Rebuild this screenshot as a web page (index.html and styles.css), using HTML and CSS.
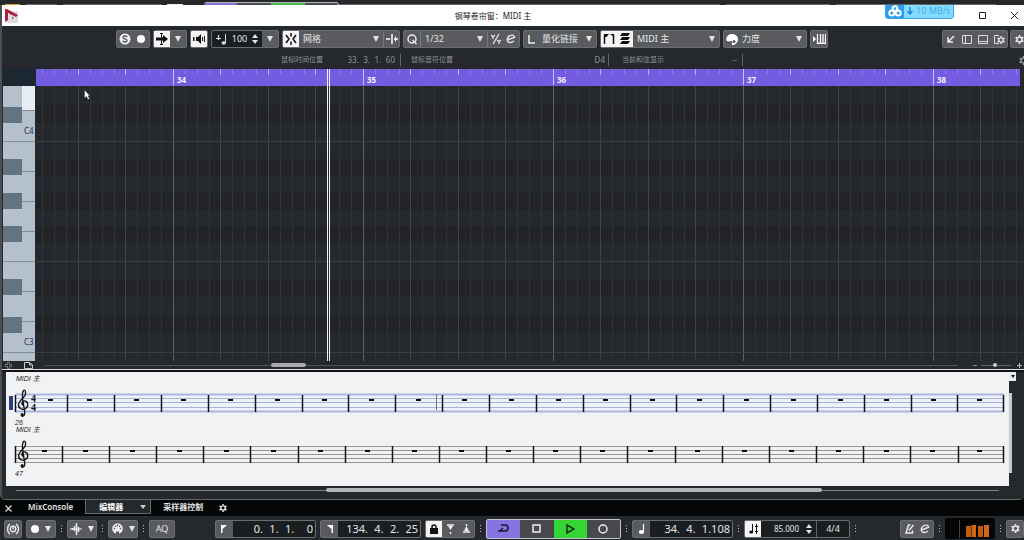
FILE: index.html
```html
<!DOCTYPE html>
<html lang="zh-CN">
<head>
<meta charset="utf-8">
<title>钢琴卷帘窗：MIDI 主</title>
<link rel="stylesheet" href="styles.css">
</head>
<body>
<svg class="defs" width="0" height="0" aria-hidden="true">
  <symbol id="down" viewBox="0 0 6 6"><path d="M0 0h6L3 6z" fill="currentColor"/></symbol>
  <symbol id="updown" viewBox="0 0 6 10"><path d="M0 4h6L3 0zM0 6h6L3 10z" fill="currentColor"/></symbol>
  <symbol id="gear" viewBox="0 0 10 10"><circle cx="5" cy="5" r="2.7" fill="none" stroke="currentColor" stroke-width="1.7"/><path d="M5 0v2M5 8v2M.7 2.5l1.7 1M7.6 6.5l1.7 1M.7 7.5l1.7-1M7.6 3.5l1.7-1" stroke="currentColor" stroke-width="1.9"/></symbol>
  <symbol id="edit" viewBox="0 0 10 10"><path d="M1.500 6L8.600 3.200C8.300 1.200 6.500.8 4.800 1.300 2.600 2 1.100 4.300 1.300 6.300c.3 2.600 3.700 2.900 6.700.7" fill="none" stroke="currentColor" stroke-width="1.400"/></symbol>
</svg>

<div class="backdrop" aria-hidden="true"><svg width="1024" height="5">
  <path d="M5 4.500h15" stroke="#d7a63a"/><path d="M26 4.500h31M63 4.500h99M300 4.500h420M726 4.500h104M836 4.500h160" stroke="#65686b"/><path d="M167 4.500h16" stroke="#eee"/>
  <path d="M205 5V3.500q0-1 1-1h131q1 0 1 1V5" fill="none" stroke="#b9b8c2"/><path d="M206 4h31" stroke="#8273d8" stroke-width="2"/><path d="M237 4h34M305 4h32" stroke="#4a4c50" stroke-width="2"/><path d="M271 4h34" stroke="#49b947" stroke-width="2"/>
</svg></div>

<div class="window">
<header class="titlebar">
  <svg class="logo" width="14" height="14" viewBox="0 0 14 14"><path d="M5 2h8v12H1z" fill="#dcdcde"/><path d="M0 0h2l11 6-2 2-8-4v7l-3 2z" fill="#ad1f3c"/><path d="M7 8l2 1-2 1z" fill="#8f1b33"/></svg>
  <h1>钢琴卷帘窗：MIDI 主</h1>
  <div class="winbtns">
    <button aria-label="最大化"><svg width="9" height="9"><path d="M1.500 1.500h6v6h-6z" fill="none" stroke="#222"/></svg></button>
    <button aria-label="关闭"><svg width="9" height="9"><path d="M1 1l7 7M8 1L1 8" stroke="#222"/></svg></button>
  </div>
</header>
<div class="speed"><span class="speed-icon"><svg width="14" height="12" viewBox="0 0 14 12" fill="none" stroke="#fff" stroke-width="2"><circle cx="7" cy="3.600" r="2.300"/><circle cx="3.800" cy="8" r="2.500"/><circle cx="10.200" cy="8" r="2.500"/></svg></span><svg width="6" height="8" viewBox="0 0 6 8"><path d="M3 0v6M.5 4L3 7l2.500-3" fill="none" stroke="#168bd8" stroke-width="1.500"/></svg><span>10 MB/s</span></div>

<div class="toolbar">
  <div class="group">
    <button aria-label="独奏"><svg width="12" height="12"><circle cx="6" cy="6" r="5.500" fill="#f0f0f0"/><path d="M8.300 4C7 2.600 4 2.700 4 4.400 4 6.200 8 5.700 8 7.600 8 9.300 5 9.400 3.700 8" fill="none" stroke="#55575a" stroke-width="1.400"/></svg></button>
    <button aria-label="录制"><svg width="8" height="8"><circle cx="4" cy="4" r="4" fill="#fff"/></svg></button>
  </div>
  <div class="group">
    <button class="on" aria-label="自动滚动"><svg width="12" height="12"><path d="M0 6h8" stroke="#111" stroke-width="3"/><path d="M7 2l5 4-5 4z" fill="#111"/><path d="M5.500 1v10M4 .5h3M4 11.500h3" stroke="#111"/></svg></button>
    <button aria-label="滚动选项"><svg class="tri"><use href="#down"/></svg></button>
  </div>
  <div class="group"><button class="on" aria-label="试听"><svg width="12" height="10"><path d="M3 3h2l3-3v10L5 7H3zM0 3h1v4H0zM1.500 3H2v4h-.5zM9 3h1v4H9zM11 2h1v6h-1z" fill="#111"/></svg></button></div>
  <div class="group">
    <label class="field vel"><svg width="11" height="11"><path d="M2.500 1v5M0 4.500h5" stroke="#ddd" stroke-width="1.200"/><path d="M9.500 0v9" stroke="#ddd"/><ellipse cx="7.700" cy="9" rx="2.200" ry="1.700" fill="#ddd"/></svg><input value="100" aria-label="插入力度"><svg width="6" height="10"><use href="#updown"/></svg></label>
    <button aria-label="力度选项"><svg class="tri"><use href="#down"/></svg></button>
  </div>
  <div class="group">
    <button class="on" aria-label="吸附"><svg width="12" height="12" fill="none" stroke="#111" stroke-width="1.500"><path d="M1 2L4 6 1 10M11 2L8 6l3 4M6 0v3.500M6 8.500V12"/></svg></button>
    <label class="pick snap"><select aria-label="吸附类型"><option>网格</option></select><svg class="tri"><use href="#down"/></svg></label>
    <button class="cut" aria-label="吸附到零点"><svg width="12" height="10"><path d="M0 5h4M8 5h4M6 0v10" stroke="#fff" stroke-width="1.500"/><path d="M9.500 2.500v5" stroke="#fff"/></svg></button>
  </div>
  <div class="group">
    <button aria-label="应用量化"><svg width="11" height="11" fill="none" stroke="#eee" stroke-width="1.500"><circle cx="5" cy="5" r="4"/><path d="M5.500 6l4 4"/></svg></button>
    <label class="pick quant cut"><select aria-label="量化预设"><option>1/32</option></select><svg class="tri"><use href="#down"/></svg></label>
    <button class="cut" aria-label="连音"><svg width="10" height="10" fill="none" stroke="#eee" stroke-width="1.200"><path d="M8 0L2 10M0 1l2 2 2-2M2 3v2M6 6l2 1.500L10 6M8 7v3"/></svg></button>
    <button aria-label="量化面板"><svg width="10" height="10"><use href="#edit"/></svg></button>
  </div>
  <div class="group"><label class="pick link"><svg width="8" height="9"><path d="M1 0v8h6" fill="none" stroke="#eee" stroke-width="1.500"/></svg><select aria-label="长度量化"><option>量化链接</option></select><svg class="tri"><use href="#down"/></svg></label></div>
  <div class="group">
    <button class="on" aria-label="显示分部边界"><svg width="12" height="10"><path d="M1.500 10V1M10.500 10V1" stroke="#111" stroke-width="1.500"/><path d="M1 0h5L3.500 3H1zM7 0h4v3z" fill="#111"/></svg></button>
    <button class="on" aria-label="仅编辑激活分部"><svg width="12" height="12"><path d="M3 0h8L9 3H1zM3 4h8L9 7H1zM3 8h8l-2 3H1z" fill="#111"/></svg></button>
    <label class="pick part"><select aria-label="当前分部"><option>MIDI 主</option></select><svg class="tri"><use href="#down"/></svg></label>
  </div>
  <div class="group"><label class="pick color"><svg width="12" height="11"><path d="M6 0c4 0 6 2.500 6 5.500S9 11 7 11c-2.500 0 0-2-1-3.500C5 6 1 9 .3 6 0 2.500 2.500 0 6 0z" fill="#fff"/><circle cx="8" cy="7.500" r="1.500" fill="#595b5e"/></svg><select aria-label="事件颜色"><option>力度</option></select><svg class="tri"><use href="#down"/></svg></label></div>
  <div class="group"><button aria-label="键盘输入"><svg width="13" height="10"><path d="M0 2l3 3-3 3z" fill="#fff"/><path d="M4.500 0v10M7.500 0v10M10 0v10M12.500 0v10M4 9.500h9" stroke="#fff" stroke-width="1.300"/></svg></button></div>
  <div class="group right">
    <button aria-label="在下部区域打开"><svg width="8" height="8" fill="none" stroke="#eee" stroke-width="1.500"><path d="M7 1L1.500 6.500M1 2v5h5"/></svg></button>
    <button aria-label="左侧区域"><svg width="10" height="9" fill="none" stroke="#ddd"><path d="M.5.5h9v8h-9zM3.500.5v8"/></svg></button>
    <button aria-label="下部区域"><svg width="10" height="9" fill="none" stroke="#ddd"><path d="M.5.5h9v8h-9zM.5 6.500h9"/></svg></button>
    <button aria-label="布局设置"><svg width="11" height="9" fill="none" stroke="#ddd"><path d="M5 .5H.5v8H5"/><use href="#gear" x="3" y="1" width="8" height="8"/></svg></button>
  </div>
  <div class="group"><button aria-label="设置"><svg width="9" height="9"><use href="#gear"/></svg></button></div>
</div>

<div class="info">
  <div class="cell"><span>鼠标时间位置</span><b>33.&#8199;3.&#8199;1.&#8199;60</b></div>
  <div class="cell wide"><span>鼠标音符位置</span><b>D4</b></div>
  <div class="cell"><span>当前和弦显示</span><b>--</b></div>
  <button class="infogear" aria-label="信息栏设置"><svg width="9" height="9"><use href="#gear"/></svg></button>
</div>

<div class="ruler">
  <div class="corner"></div>
  <svg class="ticks" width="100%" height="17">
    <defs><pattern id="t" x="137" width="190" height="17" patternUnits="userSpaceOnUse">
      <path d="M12.500 0v5M24.500 0v5M36.500 0v5M59.500 0v5M71.500 0v5M83.500 0v5M107.500 0v5M119.500 0v5M131.500 0v5M154.500 0v5M166.500 0v5M178.500 0v5" stroke="#8f7ae6"/>
      <path d="M47.500 0v6M95.500 0v6M142.500 0v6" stroke="#bdb0f2"/><path d="M.5 0v16" stroke="#c9c0f5"/>
    </pattern></defs>
    <rect width="100%" height="17" fill="#745ce0"/><rect width="100%" height="17" fill="url(#t)"/>
    <g class="barno"><text x="141" y="14">34</text><text x="331" y="14">35</text><text x="521" y="14">36</text><text x="711" y="14">37</text><text x="901" y="14">38</text></g>
    <path d="M291.500 0v17M293.500 0v17" stroke="#f0eefa"/>
  </svg>
</div>

<div class="editor">
  <svg class="keys" width="32" height="275">
    <rect width="32" height="275" fill="#b4c0cb"/><rect x="19" width="13" height="24" fill="#e6edf5"/>
    <path d="M19 24.500h13M0 55.500h32M19 85.500h13M19 115.500h13M19 145.500h13M0 175.500h32M19 205.500h13M19 235.500h13M0 266.500h32" stroke="#83909c"/>
    <path d="M0 21h19v16H0zM0 73h19v16H0zM0 107h19v16H0zM0 140h19v16H0zM0 193h19v16H0zM0 231h19v16H0z" fill="#637382"/>
    <text x="21" y="48">C4</text><text x="21" y="259">C3</text>
  </svg>
  <svg class="roll" width="100%" height="275">
    <defs><pattern id="g" x="137" width="190" height="275" patternUnits="userSpaceOnUse">
      <path d="M12.500 0v275M24.500 0v275M36.500 0v275M59.500 0v275M71.500 0v275M83.500 0v275M107.500 0v275M119.500 0v275M131.500 0v275M154.500 0v275M166.500 0v275M178.500 0v275" stroke="#303437"/>
      <path d="M47.500 0v275M95.500 0v275M142.500 0v275" stroke="#414547"/><path d="M.5 0v275" stroke="#5d6062"/>
    </pattern></defs>
    <rect width="100%" height="275" fill="#25292d"/>
    <g fill="#212327"><rect y="19" width="100%" height="18"/><rect y="73" width="100%" height="17"/><rect y="107" width="100%" height="17"/><rect y="140" width="100%" height="17"/><rect y="194" width="100%" height="17"/><rect y="230" width="100%" height="17"/></g>
    <rect width="100%" height="275" fill="url(#g)"/>
    <g fill="#3a3e41"><rect y="55" width="100%" height="1"/><rect y="175" width="100%" height="1"/><rect y="266" width="100%" height="1"/></g>
    <path d="M291.500 0v275M293.500 0v275" stroke="#eee"/>
    <path d="M48.500 4v8l2-1.500 1.500 3 1.500-.8-1.500-3h2z" fill="#fff" stroke="#222" stroke-width=".4"/>
  </svg>
</div>

<div class="hscroll">
  <svg width="7" height="7"><path d="M2.500.5h2v2h2v2h-2v2h-2v-2h-2v-2h2z" fill="none" stroke="#74787a"/></svg>
  <svg class="page" width="9" height="7" fill="none" stroke="#c8caca"><path d="M.5.5h5l3 2.500v3.500h-8zM5.500.5V3h3"/></svg>
  <div class="track"><div class="thumb"></div></div>
  <span class="minus"></span><input type="range" value="46" aria-label="水平缩放"><svg width="5" height="5"><path d="M2.500 0v5M0 2.500h5" stroke="#bbb"/></svg>
</div>

<div class="score">
  <svg class="paper" height="114">
    <rect width="100%" height="114" fill="#f1f2f4"/>
    <g transform="translate(-6 -372)">
      <rect x="15" y="394" width="989" height="18" fill="#edf2fb"/>
      <path d="M15 394.500h989M15 411.500h989" stroke="#a9b5de" stroke-width="2"/><path d="M15 398.500h989M15 402.500h989M15 407.500h989" stroke="#a7b4d5"/>
      <rect x="9" y="396" width="4" height="14" fill="#2c3d86"/>
      <path d="M15 446.500h989M15 450.500h989M15 454.500h989M15 458.500h989M15 462.500h989" stroke="#929592"/>
      <path d="M15.500 395v17M67.500 395v17M114.500 395v17M161.500 395v17M208.500 395v17M255.500 395v17M302.500 395v17M348.500 395v17M395.500 395v17M442.500 395v17M489.500 395v17M536.500 395v17M583.500 395v17M630.500 395v17M676.500 395v17M723.500 395v17M770.500 395v17M817.500 395v17M864.500 395v17M911.500 395v17M957.500 395v17M1003.500 395v17" stroke="#10131c" stroke-width="1.500"/>
      <path d="M436.500 394v16" stroke="#777"/>
      <path d="M15.500 446v17M62.500 446v17M109.500 446v17M156.500 446v17M203.500 446v17M250.500 446v17M298.500 446v17M345.500 446v17M392.500 446v17M439.500 446v17M486.500 446v17M533.500 446v17M580.500 446v17M627.500 446v17M675.500 446v17M722.500 446v17M769.500 446v17M816.500 446v17M863.500 446v17M910.500 446v17M958.500 446v17M1003.500 446v17" stroke="#111" stroke-width="1.500"/>
      <path d="M48 400h5M87 400h5M134 400h5M181 400h5M228 400h5M275 400h5M322 400h5M369 400h5M416 400h5M462 400h5M509 400h5M556 400h5M603 400h5M650 400h5M697 400h5M744 400h5M791 400h5M838 400h5M884 400h5M931 400h5M977 400h5" stroke="#050505" stroke-width="2"/>
      <path d="M42 451h5M83 451h5M130 451h5M177 451h5M224 451h5M271 451h5M318 451h5M365 451h5M412 451h5M459 451h5M506 451h5M553 451h5M600 451h5M648 451h5M695 451h5M742 451h5M789 451h5M836 451h5M884 451h5M930 451h5M977 451h5" stroke="#050505" stroke-width="2"/>
      <g id="clef"><path d="M23.500 405.500C21 404.500 21.500 400.800 24.300 400.800 28.300 400.800 29 406.500 25.500 408.600 22 410.500 18 408 18.600 404 19.200 400 25.500 397.500 25.600 393 25.600 390.500 24.500 389.500 23.600 390.500 21.500 393 22.300 397 23 401L24.800 412.500C25.200 416 22 417.500 21 415" fill="none" stroke="#111" stroke-width="1.300"/><circle cx="22.200" cy="414.500" r="1.500" fill="#111"/></g>
      <use href="#clef" y="51"/>
      <g class="meter-sig"><text x="31" y="402">4</text><text x="31" y="411">4</text></g>
      <g class="staff-name"><text x="16" y="381">MIDI 主</text><text x="16" y="432">MIDI 主</text><text x="15" y="425">26</text><text x="15" y="476">47</text></g>
    </g>
  </svg>
  <div class="side"><button aria-label="乐谱菜单"><svg width="4" height="3"><path d="M0 0h4L2 3z" fill="#111"/></svg></button><div class="vthumb"></div></div>
</div>
<div class="sscroll"><div class="track"><div class="thumb"></div></div></div>
</div>

<nav class="tabs">
  <button class="close" aria-label="关闭下部区域"><svg width="7" height="7"><path d="M.5.5l6 6M6.500.5l-6 6" stroke="#ddd" stroke-width="1.200"/></svg></button>
  <button class="tab">MixConsole</button>
  <button class="tab active">编辑器<svg width="6" height="4"><path d="M0 0h6L3 4z" fill="#ccc"/></svg></button>
  <button class="tab">采样器控制</button>
  <button class="close" aria-label="标签设置"><svg width="8" height="8"><use href="#gear"/></svg></button>
</nav>

<footer class="transport">
  <div class="group"><button aria-label="音频性能"><svg width="12" height="12" fill="none" stroke="#eee" stroke-width="1.300"><circle cx="6" cy="6" r="2.800"/><path d="M6 4v2.500M3 1C-.3 3.500-.3 8.500 3 11M9 1c3.300 2.500 3.300 7.500 0 10"/></svg></button></div>
  <div class="group m"><button aria-label="录音模式"><svg width="8" height="8"><circle cx="4" cy="4" r="4" fill="#fff"/></svg><svg class="tri"><use href="#down"/></svg></button></div><i class="dots"></i>
  <div class="group m"><button aria-label="音频录音模式"><svg width="12" height="12"><path d="M0 6h12" stroke="#eee"/><path d="M2.500 5v2M4.500 3v5M6.500 0v12M8.500 4v5" stroke="#eee" stroke-width="1.500"/></svg><svg class="tri"><use href="#down"/></svg></button></div><i class="dots"></i>
  <div class="group m"><button aria-label="MIDI 录音模式"><svg width="11" height="11"><circle cx="5.500" cy="5.500" r="5.300" fill="#eee"/><g fill="#55575a"><circle cx="2.500" cy="5.500" r=".8"/><circle cx="3.400" cy="3.300" r=".8"/><circle cx="5.500" cy="2.400" r=".8"/><circle cx="7.600" cy="3.300" r=".8"/><circle cx="8.500" cy="5.500" r=".8"/><path d="M4 8.500h3V11H4z"/></g></svg><svg class="tri"><use href="#down"/></svg></button></div><i class="dots"></i>
  <div class="group aq"><button>AQ</button></div>
  <div class="group pos first"><button aria-label="左定位点"><svg width="7" height="8"><path d="M0 0h6L1.500 4v4H0z" fill="#fff"/></svg></button><input aria-label="左定位点位置" value="0.&#8199;1.&#8199;1.&#8199;&#8199;0"></div>
  <div class="group pos"><button aria-label="右定位点"><svg width="7" height="8"><path d="M7 0H1l4.500 4v4H7z" fill="#fff"/></svg></button><input aria-label="右定位点位置" value="134.&#8199;4.&#8199;2.&#8199;25"></div>
  <div class="group"><button class="on" aria-label="锁定"><svg width="8" height="10"><path d="M0 4h8v6H0z" fill="#111"/><path d="M2 4.500V3a2 2 0 014 0v1.500" fill="none" stroke="#111" stroke-width="1.500"/></svg></button><button aria-label="打入"><svg width="7" height="10"><path d="M0 1h7M3.500 8v2" stroke="#eee" stroke-width="1.500"/><path d="M1 2h5L3.500 6z" fill="#eee"/></svg></button><button aria-label="打出"><svg width="7" height="10"><path d="M0 8h7M3.500 0v2" stroke="#eee" stroke-width="1.500"/><path d="M1 7h5L3.500 2z" fill="#eee"/></svg></button></div><i class="dots"></i>
  <div class="play">
    <button class="cycle" aria-label="循环"><svg width="11" height="9" fill="none" stroke="#171527" stroke-width="1.500"><path d="M3 1h4a2.800 2.800 0 010 6H0M5 4L2 7"/></svg></button>
    <button aria-label="停止"><svg width="9" height="9"><path d="M1 1h7v7H1z" fill="none" stroke="#eee" stroke-width="1.500"/></svg></button>
    <button class="start" aria-label="播放"><svg width="9" height="10"><path d="M1 1v8l7-4z" fill="none" stroke="#12310f" stroke-width="1.500"/></svg></button>
    <button aria-label="录音"><svg width="10" height="10"><circle cx="5" cy="5" r="4" fill="none" stroke="#eee" stroke-width="1.500"/></svg></button>
  </div><i class="dots"></i>
  <div class="group pos"><button aria-label="时间格式"><svg width="7" height="10"><path d="M5.500 0v8" stroke="#fff" stroke-width="1.200"/><ellipse cx="3.500" cy="8" rx="2.700" ry="1.900" fill="#fff"/></svg></button><input aria-label="主时间显示" value="34.&#8199;4.&#8199;1.108"></div><i class="dots"></i>
  <div class="group tempo"><button class="on" aria-label="速度轨道"><svg width="9" height="10"><path d="M3.500 0v8M7.500 0v10M6 2.500h3M6 7.500h3" stroke="#111"/><ellipse cx="2.200" cy="8" rx="2" ry="1.600" fill="#111"/></svg></button><input class="bpm" aria-label="速度" value="85.000"><span class="step"><svg width="6" height="10"><use href="#updown"/></svg></span><input class="sig" aria-label="拍号" value="4/4"></div><i class="dots"></i>
  <div class="group right"><button aria-label="节拍器"><svg width="9" height="10"><path d="M3.500 1L1 9h6.500V6.500M4 6.500L8.500 1M3 1h2.500" fill="none" stroke="#eee" stroke-width="1.500"/></svg></button><button aria-label="节拍器设置"><svg width="10" height="10"><use href="#edit"/></svg></button></div><i class="dots"></i>
  <svg class="vu" width="50" height="21"><rect width="50" height="21" rx="2" fill="#050505"/><path d="M14.500 2v18" stroke="#444"/><g fill="#c45a10"><rect x="21" y="8" width="5" height="11"/><rect x="33" y="8" width="5" height="11"/></g><g fill="#d0661a"><rect x="26.500" y="7" width="4.500" height="12"/><rect x="39" y="7" width="5" height="12"/></g></svg><i class="dots"></i>
  <div class="group"><button aria-label="走带设置"><svg width="9" height="9"><use href="#gear"/></svg></button></div>
</footer>
</body>
</html>
```
FILE: styles.css
```css
* { box-sizing: border-box; }
body {
  margin: 0;
  min-height: 100vh;
  display: flex;
  flex-direction: column;
  background: #050606;
  color: #e4e5e6;
  font: 9px/12px "Noto Sans", "Noto Sans CJK SC", sans-serif;
  overflow: hidden;
}
svg { display: block; flex: none; }
.defs { position: absolute; }
button, input, select {
  margin: 0;
  padding: 0;
  border: 0;
  border-radius: 0;
  background: none;
  color: inherit;
  font: inherit;
  min-width: 0;
}
button { display: flex; align-items: center; justify-content: center; flex: none; }
select { appearance: none; flex: 1; }
.tri { width: 6px; height: 6px; }
.backdrop { height: 5px; background: #25282b; overflow: hidden; }

.window {
  position: relative;
  border-left: 2px solid #4c4f52;
  border-bottom: 1px solid #65686b;
  border-radius: 0 0 5px 5px;
  background: #25292d;
  overflow: hidden;
}
.titlebar {
  height: 21px;
  display: flex;
  align-items: center;
  padding: 0 1px 0 3px;
  background: #fff;
  color: #222;
}
.titlebar h1 { flex: 1; margin: 0; padding-right: 6px; text-align: center; font-size: 8px; font-weight: 400; }
.winbtns { display: flex; gap: 14px; }
.winbtns button { width: 18px; height: 21px; }

.speed {
  position: absolute;
  top: -2px;
  right: 70px;
  width: 69px;
  height: 16px;
  display: flex;
  align-items: center;
  gap: 3px;
  border: 1px solid #3aa7ea;
  border-radius: 3px;
  background: #83dcff;
  color: #44afe6;
  white-space: nowrap;
}
.speed-icon { background: #2a9df2; align-self: stretch; display: flex; align-items: center; padding: 0 2px; }

.toolbar { display: flex; gap: 3px; padding: 4px 0 3px 114px; height: 26px; }
.group {
  display: flex;
  height: 18px;
  flex: none;
  border: 1px solid #6b6e71;
  border-radius: 2px;
  background: #595b5e;
  overflow: hidden;
}
.group button { width: 16px; height: 16px; }
.group .on { background: #f4f4f4; }
.right { margin-left: auto; }
.field { display: flex; align-items: center; background: #1b1e21; padding: 0 4px; gap: 4px; }
.vel { width: 50px; }
.vel input { flex: 1; width: 0; text-align: center; }
.pick { display: flex; align-items: center; gap: 6px; padding: 0 4px; }
.snap { width: 84px; }
.quant { width: 67px; }
.link { width: 72px; }
.part { width: 86px; }
.color { width: 82px; gap: 4px; padding-left: 2px; }
.cut { border-left: 1px solid #77797b; }
.toolbar .right + .group { margin: 0 -4px 0 -1px; }

.info {
  height: 17px;
  display: flex;
  align-items: flex-start;
  padding: 2px 0 0 279px;
  color: #8f9294;
  font-size: 7px;
}
.cell { display: flex; justify-content: space-between; width: 120px; padding-right: 5px; border-right: 1px solid #65686a; }
.cell b { font-weight: 400; font-size: 8px; }
.wide { width: 208px; padding-left: 10px; padding-right: 3px; }
.wide + .cell { width: 134px; padding-left: 13px; }
.infogear { margin: 2px -4px 0 auto; }

.ruler, .editor { display: flex; padding-left: 1px; }
.corner { width: 33px; flex: none; background: #1b2731; }
.ticks { flex: 1; margin-right: 4px; }
.barno { fill: #f5f2ff; font-size: 8px; font-weight: 700; }
.keys { margin-right: 1px; font-size: 8px; fill: #26323c; }
.roll { flex: 1; margin-right: 2px; }

.hscroll { display: flex; align-items: center; height: 8px; padding: 0 2px 0 3px; }
.page { margin-left: 12px; }
.hscroll .track { flex: 1; margin: 0 15px 0 12px; height: 4px; background: linear-gradient(#505356, #505356) center / 100% 1px no-repeat; }
.hscroll .thumb { margin-left: 24.800%; width: 35px; height: 4px; border-radius: 2px; background: #aaa9aa; }
.minus { width: 4px; height: 1px; background: #888; margin-right: 4px; }
.hscroll input { appearance: none; width: 30px; height: 5px; margin-right: 6px; background: linear-gradient(#606366, #606366) center / 100% 1px no-repeat; }
.hscroll input::-webkit-slider-thumb { appearance: none; width: 4px; height: 4px; border-radius: 2px; background: #ccc; }

.score { display: flex; padding-left: 4px; border-top: 1px solid #ddd; box-shadow: inset 0 2px #121417; padding-top: 2px; }
.paper { flex: 1; width: 0; }
.side { width: 15px; }
.side button { width: 7px; height: 9px; background: #e4edf2; }
.vthumb { width: 3px; height: 80px; margin-top: 12px; background: #c5c8c9; }
.staff-name { font: italic 7px "Liberation Sans", "Noto Sans CJK SC", sans-serif; fill: #222; }
.meter-sig { font: bold 10px "Liberation Serif", serif; fill: #111; }
.sscroll { height: 13px; padding: 2px 25px 0 14px; }
.sscroll .track { height: 4px; background: linear-gradient(#7d8082, #7d8082) center / 100% 1px no-repeat; }
.sscroll .thumb { margin-left: 31.500%; width: 50.500%; height: 4px; border-radius: 2px; background: #b3b4b4; }

.tabs { display: flex; height: 16px; font-size: 8px; font-weight: 600; }
.close { width: 16px; }
.tab { padding: 0 12px; height: 14px; }
.active {
  gap: 17px;
  padding: 0 4px 0 13px;
  background: #25292d;
  color: #fff;
  border: 1px solid #65686b;
  border-top: 0;
}

.transport {
  flex: 1;
  display: flex;
  align-items: center;
  gap: 4px;
  padding: 1px 0 0 4px;
  background: #25292d;
}
.m { width: 30px; }
.m button { gap: 6px; width: 28px; }
.dots { flex: none; width: 3px; height: 9px; background: radial-gradient(circle, #b9bbbc 1px, transparent 1px) 0 0 / 3px 3px; }
.aq { font-size: 9px; }
.aq button { width: 24px; }
.pos { width: 101px; font-size: 11px; }
.pos button { width: 17px; }
.pos input { flex: 1; background: #1b1e21; text-align: right; padding-right: 2px; }
.first { margin-left: 36px; }
.play { display: flex; flex: none; width: 135px; height: 20px; border: 1px solid #c5c5c9; border-radius: 2px; background: #47494d; }
.play button { flex: 1; }
.cycle { background: #8673e2; }
.start { background: #36d536; }
.tempo { background: #1b1e21; width: 106px; }
.bpm { width: 38px; text-align: right; font-size: 8px; }
.step { display: flex; align-items: center; padding: 0 4px 0 7px; }
.sig { flex: 1; border-left: 1px solid #606265; text-align: center; }
```
